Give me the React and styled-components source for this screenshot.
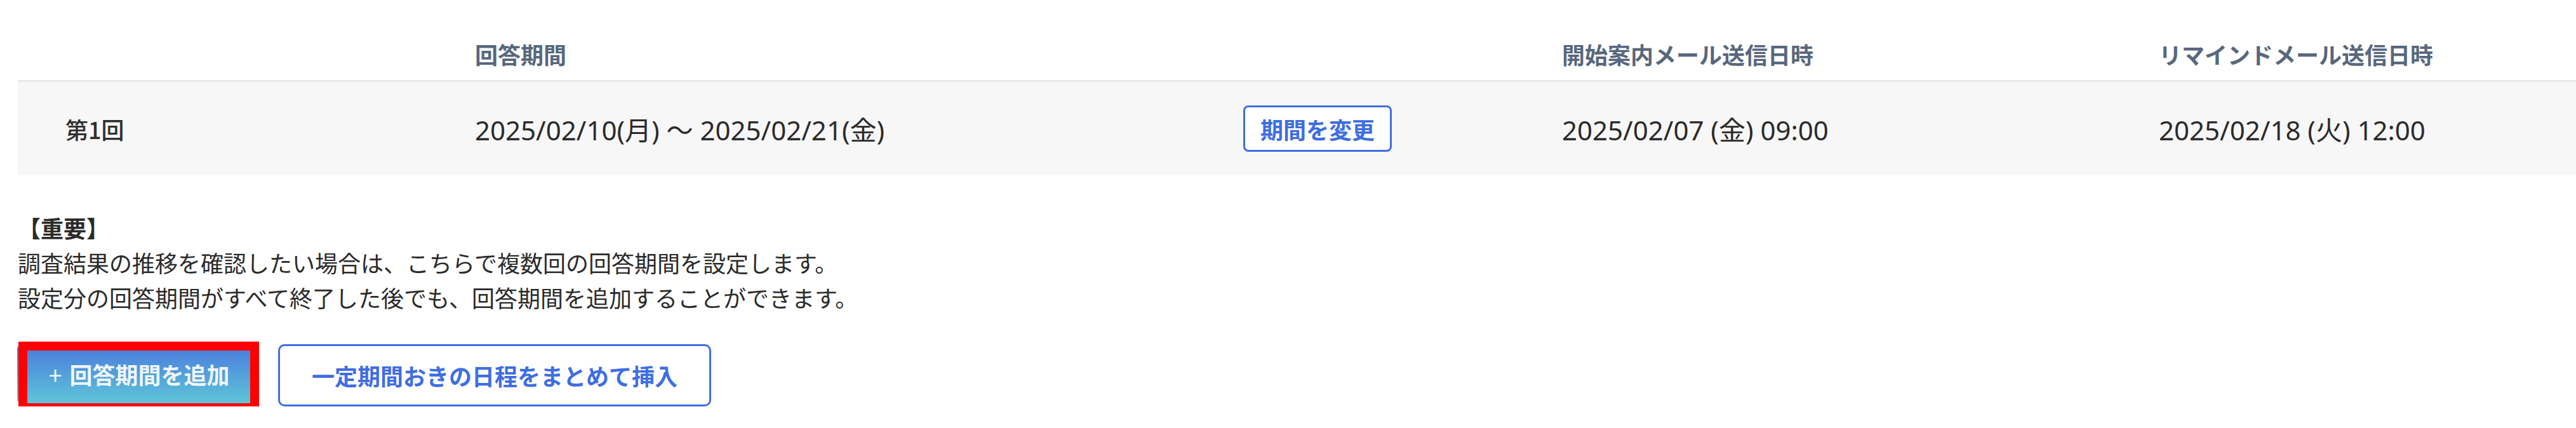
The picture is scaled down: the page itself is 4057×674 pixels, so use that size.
import React from "react";
import styled, { createGlobalStyle } from "styled-components";

const Global = createGlobalStyle`
  html, body {
    margin: 0;
    padding: 0;
    background: #ffffff;
  }
  body {
    font-family: "Noto Sans", "Noto Sans CJK JP", sans-serif;
    color: #2b2b2b;
  }
`;

const Page = styled.div`
  width: 4057px;
  box-sizing: border-box;
  padding: 44px 0 0 28px;
`;

const Table = styled.div`
  display: flex;
  flex-direction: column;
`;

const Grid = styled.div`
  display: grid;
  grid-template-columns: 720px 1210px 502px 940px 1fr;
`;

const HeaderRow = styled(Grid)`
  height: 82px;
  border-bottom: 3px solid #e6e8eb;
`;

const HeaderCell = styled.div`
  display: flex;
  align-items: center;
  font-family: "Noto Sans CJK JP", sans-serif;
  font-size: 36px;
  font-weight: 700;
  color: #58677c;
  white-space: nowrap;
`;

const BodyRow = styled(Grid)`
  height: 147px;
  background: #f7f7f7;
`;

const Cell = styled.div`
  display: flex;
  align-items: center;
  padding-left: ${(p) => p.$inset || 0}px;
  white-space: nowrap;
`;

const RoundLabel = styled.span`
  font-family: "Noto Sans CJK JP", sans-serif;
  font-size: 36px;
  font-weight: 500;
  color: #2f2f2f;
`;

const DateText = styled.span`
  font-size: 42px;
  color: #2b2b2b;
`;

const SmallOutlineButton = styled.button`
  box-sizing: border-box;
  height: 73px;
  padding: 0 24px;
  background: #ffffff;
  border: 3px solid #3f6ee2;
  border-radius: 8px;
  font-family: "Noto Sans CJK JP", sans-serif;
  font-size: 36px;
  font-weight: 700;
  color: #3f6ee2;
  cursor: pointer;
  line-height: 1;
`;

const Notice = styled.div`
  margin-top: 55px;
  font-family: "Noto Sans CJK JP", sans-serif;
  font-size: 36px;
  line-height: 55px;
  color: #2b2b2b;
`;

const NoticeTitle = styled.div`
  font-weight: 700;
`;

const NoticeLine = styled.div``;

const ButtonRow = styled.div`
  margin-top: 44px;
  display: flex;
  align-items: flex-start;
  gap: 33px;
`;

const Highlight = styled.div`
  position: relative;
  margin-left: -1px;
`;

const RedFrame = styled.div`
  position: absolute;
  top: -2px;
  left: 2px;
  width: 379px;
  height: 111px;
  box-sizing: border-box;
  border: 14px solid #ff0000;
  pointer-events: none;
`;

const PrimaryButton = styled.button`
  box-sizing: border-box;
  width: 378px;
  height: 98px;
  border: none;
  border-radius: 10px;
  background: linear-gradient(180deg, #4877dd 0%, #5fc8d8 100%);
  color: rgba(255, 255, 255, 0.92);
  font-family: "Noto Sans CJK JP", sans-serif;
  font-size: 36px;
  font-weight: 700;
  display: flex;
  align-items: center;
  justify-content: center;
  gap: 12px;
  padding: 0 0 0 6px;
  cursor: pointer;
`;

const Plus = styled.span`
  font-weight: 400;
  font-size: 38px;
`;

const OutlineButton = styled.button`
  box-sizing: border-box;
  height: 98px;
  padding: 0 50px;
  margin-top: 2px;
  background: #ffffff;
  border: 3px solid #3f6ee2;
  border-radius: 10px;
  font-family: "Noto Sans CJK JP", sans-serif;
  font-size: 36px;
  font-weight: 700;
  color: #3f6ee2;
  cursor: pointer;
`;

export default function App() {
  return (
    <>
      <Global />
      <Page>
        <Table>
          <HeaderRow>
            <HeaderCell />
            <HeaderCell>回答期間</HeaderCell>
            <HeaderCell />
            <HeaderCell>開始案内メール送信日時</HeaderCell>
            <HeaderCell>リマインドメール送信日時</HeaderCell>
          </HeaderRow>
          <BodyRow>
            <Cell $inset={75}>
              <RoundLabel>第1回</RoundLabel>
            </Cell>
            <Cell>
              <DateText>2025/02/10(月) ～ 2025/02/21(金)</DateText>
            </Cell>
            <Cell>
              <SmallOutlineButton>期間を変更</SmallOutlineButton>
            </Cell>
            <Cell>
              <DateText>2025/02/07 (金) 09:00</DateText>
            </Cell>
            <Cell>
              <DateText>2025/02/18 (火) 12:00</DateText>
            </Cell>
          </BodyRow>
        </Table>

        <Notice>
          <NoticeTitle>【重要】</NoticeTitle>
          <NoticeLine>調査結果の推移を確認したい場合は、こちらで複数回の回答期間を設定します。</NoticeLine>
          <NoticeLine>設定分の回答期間がすべて終了した後でも、回答期間を追加することができます。</NoticeLine>
        </Notice>

        <ButtonRow>
          <Highlight>
            <PrimaryButton>
              <Plus>+</Plus>
              <span>回答期間を追加</span>
            </PrimaryButton>
            <RedFrame />
          </Highlight>
          <OutlineButton>一定期間おきの日程をまとめて挿入</OutlineButton>
        </ButtonRow>
      </Page>
    </>
  );
}
